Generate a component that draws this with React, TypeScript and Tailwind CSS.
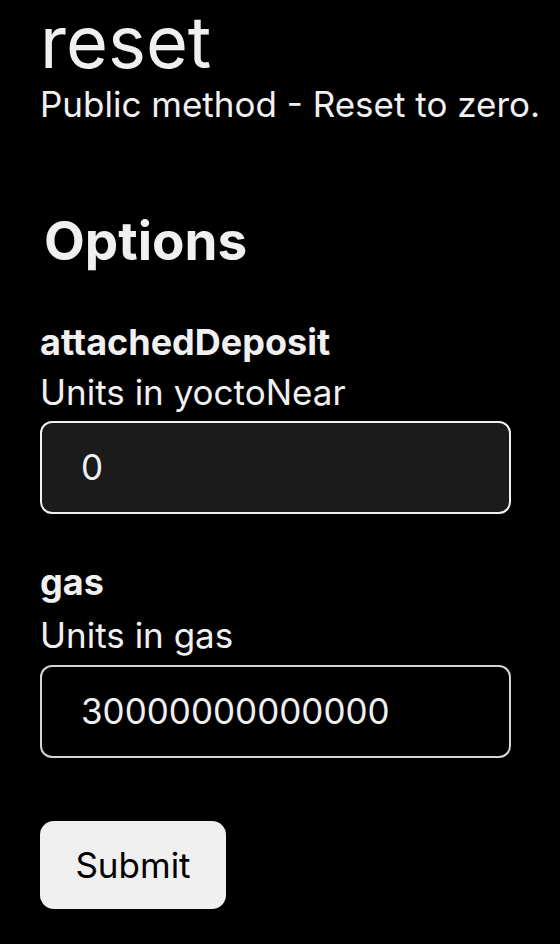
export default function App() {
  return (
    <div className="min-h-[944px] w-[560px] bg-black text-[#f0f0f0] overflow-hidden" style={{ fontFamily: "Inter, 'Noto Sans', sans-serif" }}>
      <div className="pl-[40px] pr-4 pt-[6px]">
        <h1 className="text-[72px] leading-[72px] font-normal">reset</h1>
        <p className="text-[35px] leading-[42px] mt-[5px]">Public method - Reset to zero.</p>
        <h2 className="text-[53px] font-bold leading-[64px] mt-[84px] ml-[4px]">Options</h2>
        <div className="mt-[48px]">
          <div className="text-[36px] font-bold leading-[42px]">attachedDeposit</div>
          <div className="text-[35px] leading-[42px] mt-[8px]">Units in yoctoNear</div>
          <div className="mt-[8px] w-[471px] h-[93px] rounded-[12px] border-2 border-[#f0f0f0] bg-[#1b1b1b] flex items-center pl-[39px] text-[35px]">0</div>
        </div>
        <div className="mt-[47px]">
          <div className="text-[36px] font-bold leading-[42px]">gas</div>
          <div className="text-[35px] leading-[42px] mt-[11px]">Units in gas</div>
          <div className="mt-[9px] w-[471px] h-[93px] rounded-[12px] border-2 border-[#d4d4d4] bg-black flex items-center pl-[39px] text-[35px]">30000000000000</div>
        </div>
        <button className="mt-[63px] w-[186px] h-[88px] rounded-[14px] bg-[#f0f0f0] text-black text-[35px] flex items-center justify-center">Submit</button>
      </div>
    </div>
  );
}
